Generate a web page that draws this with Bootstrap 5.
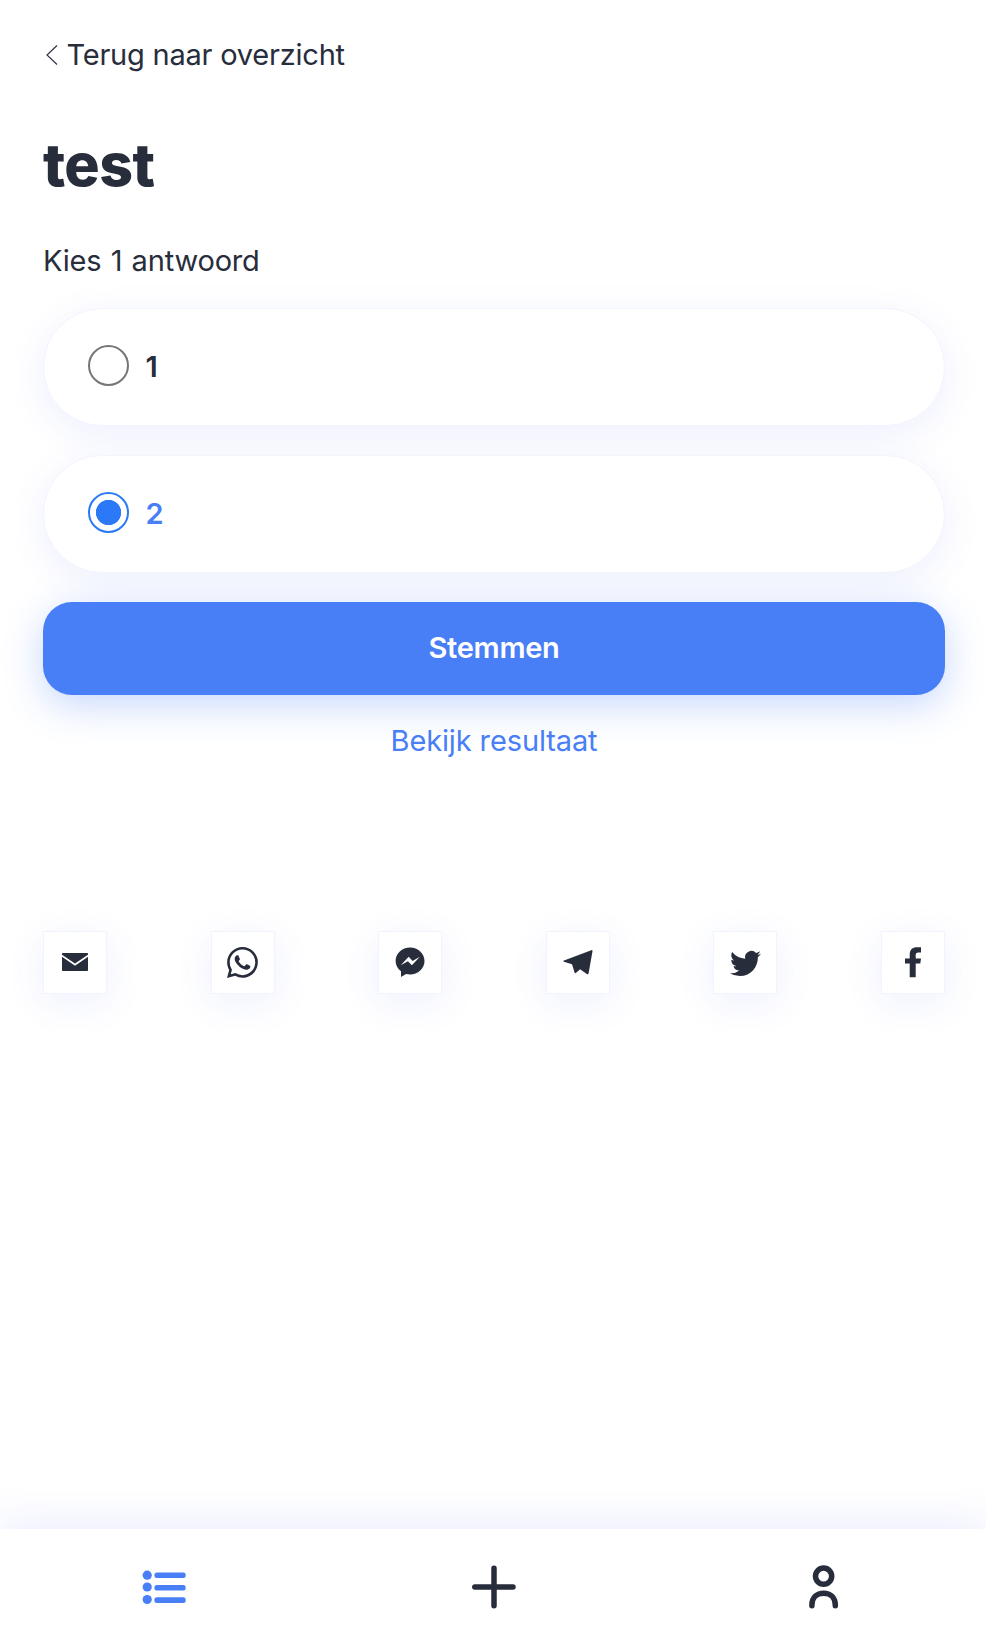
<!DOCTYPE html>
<html lang="nl">
<head>
<meta charset="utf-8">
<meta name="viewport" content="width=device-width, initial-scale=1">
<title>test</title>
<link href="https://cdn.jsdelivr.net/npm/bootstrap@5.3.0/dist/css/bootstrap.min.css" rel="stylesheet">
<style>
  :root { --ink: #282d3c; --blue: #487ef6; --soft: 0 9px 38px rgba(72, 90, 246, .09); }
  body { font-family: Inter, "Liberation Sans", sans-serif; font-size: 29px; line-height: 44px; color: var(--ink); background: #fff; }
  .page { padding: 33px 41px 0 43px; }
  .back { color: var(--ink); gap: 8.5px; margin-left: 3px; letter-spacing: -.22px; }
  .poll-title { font-size: 59px; line-height: 72px; font-weight: 760; letter-spacing: -.6px; margin: 51px 0 0; }
  .poll-hint { margin: 38px 0 24.6px; letter-spacing: -.18px; word-spacing: 1.3px; }
  .option { height: 118px; border: 1px solid #f3f4fe; border-radius: 59px; box-shadow: var(--soft); background: #fff; padding-left: 44px; margin-bottom: 29.2px; font-weight: 600; }
  .option .form-check-input { width: 41px; height: 41px; margin: 0 16.5px 2px 0; border: 2px solid #767676; box-shadow: none; }
  .option .form-check-input:checked { border-color: #2b79f7; background: radial-gradient(circle, #2b79f7 12.3px, #fff 13px); }
  .option.chosen { color: var(--blue); }
  .vote { height: 93px; border: 0; padding: 0 0 1px; border-radius: 29px; background: var(--blue); color: #fff; font-size: 29px; font-weight: 600; letter-spacing: -.28px; box-shadow: 0 10px 39px rgba(72, 126, 246, .31); }
  .result { color: var(--blue); margin-top: 24px; letter-spacing: -.12px; }
  .share { margin-top: 168px; }
  .share a { width: 64px; height: 63px; border: 1px solid #f1f3fe; background: #fff; color: var(--ink); box-shadow: var(--soft); }
  .tabs { height: 115px; background: #fff; box-shadow: 0 -8px 40px rgba(72, 90, 246, .1); color: var(--ink); }
  svg { display: block; flex: none; }
</style>
</head>
<body>
<main class="page min-vh-100">
  <a href="#" class="back d-inline-flex align-items-center text-decoration-none">
    <svg width="12" height="22" viewBox="0 0 12 22" fill="none" stroke="currentColor" stroke-width="1.1"><path d="M11 1.500 1 11l10 9.500"/></svg>
    <span>Terug naar overzicht</span>
  </a>
  <h1 class="poll-title">test</h1>
  <p class="poll-hint">Kies 1 antwoord</p>
  <form>
    <label class="option d-flex align-items-center"><input class="form-check-input" type="radio" name="answer"><span>1</span></label>
    <label class="option chosen d-flex align-items-center"><input class="form-check-input" type="radio" name="answer" checked><span>2</span></label>
    <button type="button" class="vote btn w-100 d-flex align-items-center justify-content-center">Stemmen</button>
  </form>
  <div class="text-center"><a href="#" class="result d-inline-block text-decoration-none">Bekijk resultaat</a></div>
  <div class="share d-flex justify-content-between">
    <a href="#" class="d-flex align-items-center justify-content-center" aria-label="E-mail">
      <svg width="32" height="32" viewBox="0 0 32 32" fill="currentColor"><path d="M3.800 7h24.400q.8 0 .8.800v1L16 17.500 3 8.800v-1q0-.8.800-.8ZM3 10.700l13 9 13-9v13.500q0 .8-.8.800H3.800q-.8 0-.8-.8Z"/></svg>
    </a>
    <a href="#" class="d-flex align-items-center justify-content-center" aria-label="WhatsApp">
      <svg width="31" height="31" viewBox="0 0 16 16" fill="currentColor"><path d="M13.601 2.326A7.85 7.85 0 0 0 7.994 0C3.627 0 .068 3.558.064 7.926c0 1.399.366 2.76 1.057 3.965L0 16l4.204-1.102a7.9 7.9 0 0 0 3.79.965h.004c4.368 0 7.926-3.558 7.93-7.93A7.9 7.9 0 0 0 13.6 2.326zM7.994 14.521a6.6 6.6 0 0 1-3.356-.92l-.24-.144-2.494.654.666-2.433-.156-.251a6.56 6.56 0 0 1-1.007-3.505c0-3.626 2.957-6.584 6.591-6.584a6.56 6.56 0 0 1 4.66 1.931 6.56 6.56 0 0 1 1.928 4.66c-.004 3.639-2.961 6.592-6.592 6.592m3.615-4.934c-.197-.099-1.17-.578-1.353-.646-.182-.065-.315-.099-.445.099-.133.197-.513.646-.627.775-.114.133-.232.148-.43.05-.197-.1-.836-.308-1.592-.985-.59-.525-.985-1.175-1.103-1.372-.114-.198-.011-.304.088-.403.087-.088.197-.232.296-.346.1-.114.133-.198.198-.33.065-.134.034-.248-.015-.347-.05-.099-.445-1.076-.612-1.47-.16-.389-.323-.335-.445-.34-.114-.007-.247-.007-.38-.007a.73.73 0 0 0-.529.247c-.182.198-.691.677-.691 1.654s.71 1.916.81 2.049c.098.133 1.394 2.132 3.383 2.992.47.205.84.326 1.129.418.475.152.904.129 1.246.08.38-.058 1.171-.48 1.338-.943.164-.464.164-.86.114-.943-.049-.084-.182-.133-.38-.232"/></svg>
    </a>
    <a href="#" class="d-flex align-items-center justify-content-center" aria-label="Messenger">
      <svg width="32" height="32" viewBox="0 0 32 32" fill="currentColor" fill-rule="evenodd"><path d="M16 1.500C8 1.500 1.600 7.600 1.600 15c0 4.200 2.100 7.900 5.400 10.300v5.600l5.100-2.800c1.200.3 2.600.5 3.900.5 8 0 14.500-6.100 14.500-13.600S24 1.500 16 1.500ZM6.700 19.300l8-8.500 3.900 4.100 7.300-4.100-8 8.500-4-4.100Z"/></svg>
    </a>
    <a href="#" class="d-flex align-items-center justify-content-center" aria-label="Telegram">
      <svg width="32" height="32" viewBox="0 0 32 32" fill="currentColor"><path d="M29.300 4.200c.9-.3 1.300.1 1.200 1.100l-3.900 21.900c-.2 1.200-.9 1.400-1.800.8l-6.700-4.700-4 3.500c-.8.700-1.300.5-1.600-.5L10 18.200l-8-2.400c-1-.3-1-.9 0-1.300Z"/></svg>
    </a>
    <a href="#" class="d-flex align-items-center justify-content-center" aria-label="Twitter">
      <svg width="31" height="31" viewBox="0 0 16 16" fill="currentColor"><path d="M5.026 15c6.038 0 9.341-5.003 9.341-9.334q.002-.211-.006-.422A6.700 6.700 0 0 0 16 3.542a6.700 6.700 0 0 1-1.889.518 3.300 3.300 0 0 0 1.447-1.817 6.500 6.500 0 0 1-2.087.793A3.286 3.286 0 0 0 7.875 6.030a9.320 9.320 0 0 1-6.767-3.429 3.290 3.290 0 0 0 1.018 4.382A3.300 3.300 0 0 1 .64 6.575v.045a3.290 3.290 0 0 0 2.632 3.218 3.200 3.200 0 0 1-.865.115 3 3 0 0 1-.614-.057 3.280 3.280 0 0 0 3.067 2.277A6.600 6.600 0 0 1 .78 13.580a6 6 0 0 1-.78-.045A9.340 9.340 0 0 0 5.026 15"/></svg>
    </a>
    <a href="#" class="d-flex align-items-center justify-content-center" aria-label="Facebook">
      <svg width="32" height="32" viewBox="0 0 32 32" fill="currentColor"><path d="M12.700 31.300V17.500H8v-5h4.700V8.600C12.700 3.700 15.600 1.300 19.900 1.300H24v5.200h-2.600c-2.100 0-2.700 1-2.700 2.800v3.200H24l-.7 5h-4.600v13.800Z"/></svg>
    </a>
  </div>
</main>
<nav class="tabs fixed-bottom d-flex align-items-center" aria-label="Hoofdmenu">
  <a href="#" class="col-4 d-flex justify-content-center" style="color: var(--blue)" aria-label="Overzicht">
    <svg width="44" height="44" viewBox="0 0 44 44" fill="currentColor"><circle cx="5.200" cy="10.200" r="4.600"/><circle cx="5.200" cy="22" r="4.600"/><circle cx="5.200" cy="34.500" r="4.600"/><rect x="12.400" y="7.400" width="31.300" height="5.700" rx="2.500"/><rect x="12.400" y="19.900" width="31.300" height="5.700" rx="2.500"/><rect x="12.400" y="32.300" width="31.300" height="5.700" rx="2.500"/></svg>
  </a>
  <a href="#" class="col-4 d-flex justify-content-center text-reset" aria-label="Nieuw">
    <svg width="46" height="44" viewBox="0 0 46 44" fill="none" stroke="currentColor" stroke-width="5.500" stroke-linecap="round"><path d="M24 3.300v37.400M4.800 22h38.200"/></svg>
  </a>
  <a href="#" class="col-4 d-flex justify-content-center text-reset" aria-label="Profiel">
    <svg width="44" height="44" viewBox="0 0 44 44" fill="none" stroke="currentColor" stroke-width="5.500" stroke-linecap="round"><circle cx="23.600" cy="11.200" r="8.100"/><path d="M11.900 40.700v-.7c0-7.500 5-11.800 11.700-11.800S35.300 32.500 35.300 40v.7"/></svg>
  </a>
</nav>
<script src="https://cdn.jsdelivr.net/npm/bootstrap@5.3.0/dist/js/bootstrap.bundle.min.js"></script>
</body>
</html>
